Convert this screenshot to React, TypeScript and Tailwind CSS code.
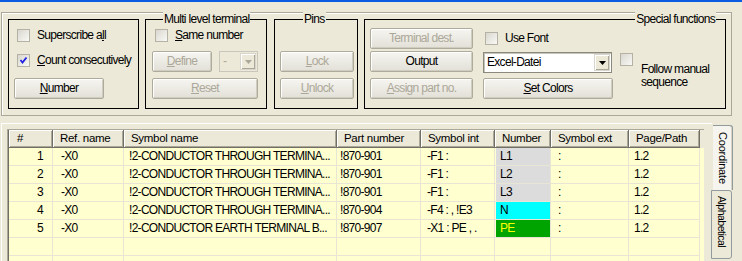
import React from "react";

type Kids = { children?: React.ReactNode; className?: string };

const Box = ({ checked }: { checked?: boolean }) => (
  <span className="relative block h-[13px] w-[13px] shrink-0 border border-[#b5b2a5] bg-gradient-to-br from-[#d9d7ce] to-[#f9f9f6]">
    {checked && (
      <svg viewBox="0 0 11 11" className="absolute left-0 top-0 h-[11px] w-[11px]">
        <path d="M2.5 5 L4.5 7.5 L8.5 2.5" fill="none" stroke="#2121e0" strokeWidth="1.8" />
      </svg>
    )}
  </span>
);

const Check = ({ children, className = "", checked }: Kids & { checked?: boolean }) => (
  <div className={`flex h-[13px] items-center gap-[7px] whitespace-nowrap ${className}`}>
    <Box checked={checked} />
    <span>{children}</span>
  </div>
);

const Btn = ({ children, className = "", off }: Kids & { off?: boolean }) => (
  <div
    className={`flex h-[21px] items-center justify-center whitespace-nowrap rounded-[2px] border border-[#aeab9d] bg-gradient-to-b from-[#f6f5f1] to-[#e2e0d7] shadow-[inset_1px_1px_0_#fff,inset_-1px_-1px_0_#cfccc0] ${
      off ? "text-[#aca899]" : "text-black"
    } ${className}`}
  >
    {children}
  </div>
);

const Arrow = ({ off }: { off?: boolean }) => (
  <div className="flex h-full w-[16px] items-center justify-center border border-[#d8d6cc] bg-[#ece9d8] shadow-[inset_1px_1px_0_#fff,inset_-1px_-1px_0_#aca899]">
    <svg viewBox="0 0 7 4" className="h-[4px] w-[7px]">
      <path d="M0 0 H7 L3.5 4 Z" fill={off ? "#aca899" : "#000"} />
    </svg>
  </div>
);

const Group = ({ children, className = "", title, titleClass = "" }: Kids & { title?: string; titleClass?: string }) => (
  <div className={`relative h-[90px] shrink-0 border border-black ${className}`}>
    {title && (
      <span className={`absolute -top-[8px] bg-[#ece9d8] px-[1px] leading-[14px] ${titleClass}`}>{title}</span>
    )}
    {children}
  </div>
);

const cols = [
  { label: "#", w: 44 },
  { label: "Ref. name", w: 71 },
  { label: "Symbol name", w: 213 },
  { label: "Part number", w: 84 },
  { label: "Symbol int", w: 74 },
  { label: "Number", w: 56 },
  { label: "Symbol ext", w: 78 },
  { label: "Page/Path", w: 71 },
];

const rows = [
  ["1", "-X0", "!2-CONDUCTOR THROUGH TERMINA...", "!870-901", "-F1 :", "L1", ":", "1.2"],
  ["2", "-X0", "!2-CONDUCTOR THROUGH TERMINA...", "!870-901", "-F1 :", "L2", ":", "1.2"],
  ["3", "-X0", "!2-CONDUCTOR THROUGH TERMINA...", "!870-901", "-F1 :", "L3", ":", "1.2"],
  ["4", "-X0", "!2-CONDUCTOR THROUGH TERMINA...", "!870-904", "-F4 :  , !E3", "N", ":", "1.2"],
  ["5", "-X0", "!2-CONDUCTOR EARTH TERMINAL B...", "!870-907", "-X1 : PE , .", "PE", ":", "1.2"],
  ["", "", "", "", "", "", "", ""],
  ["", "", "", "", "", "", "", ""],
];

const numColor: Record<string, string> = {
  L1: "bg-[#dcdcdc] text-black",
  L2: "bg-[#dcdcdc] text-black",
  L3: "bg-[#dcdcdc] text-black",
  N: "bg-[#00ffff] text-black",
  PE: "bg-[#00a400] text-[#ffff00]",
};

const pad = ["pr-[9px] justify-end", "pl-[8px]", "pl-[5px]", "pl-[3px]", "pl-[6px]", "", "pl-[7px]", "pl-[5px]"];

export default function App() {
  return (
    <div className="h-[261px] w-[742px] overflow-hidden bg-[#ece9d8] font-[family-name:Liberation_Sans,Arial,sans-serif] text-[12px] leading-[13px] tracking-[-0.7px] text-black">
      <div className="h-[2px] bg-[#0b5be2]" />

      {/* top options panel */}
      <div className="ml-[1px] mt-[10px] flex h-[104px] w-[731px] border border-[#aca899] pl-[6px] pt-[6px] shadow-[inset_1px_1px_0_#fff]">
        <Group className="w-[131px]">
          <div className="pl-[8px] pt-[9px]">
            <Check>
              Superscribe a<u>l</u>l
            </Check>
            <Check className="mt-[12px]" checked>
              <u>C</u>ount consecutively
            </Check>
            <Btn className="-ml-[3px] mt-[11px] w-[90px]">
              <u>N</u>umber
            </Btn>
          </div>
        </Group>

        <Group className="ml-[6px] w-[122px]" title="Multi level terminal" titleClass="left-[17px]">
          <div className="pl-[9px] pt-[9px]">
            <Check>
              <u>S</u>ame number
            </Check>
            <div className="-ml-[3px] mt-[9px] flex gap-[7px]">
              <Btn off className="w-[60px]">
                <u>D</u>efine
              </Btn>
              <div className="flex h-[21px] w-[39px] items-center border border-[#c9c7bc] bg-[#ece9d8] p-[1px] pl-[3px] text-[#aca899]">
                <span className="flex-1">-</span>
                <Arrow off />
              </div>
            </div>
            <Btn off className="-ml-[3px] mt-[6px] w-[106px]">
              <u>R</u>eset
            </Btn>
          </div>
        </Group>

        <Group className="ml-[7px] w-[84px]" title="Pins" titleClass="left-[28px]">
          <div className="pl-[5px] pt-[31px]">
            <Btn off className="w-[74px]">
              <u>L</u>ock
            </Btn>
            <Btn off className="mt-[6px] w-[74px]">
              <u>U</u>nlock
            </Btn>
          </div>
        </Group>

        <Group className="ml-[6px] flex w-[362px]" title="Special functions" titleClass="right-[9px]">
          <div className="pl-[5px] pt-[8px]">
            <Btn off className="w-[103px]">
              Terminal dest.
            </Btn>
            <Btn className="mt-[2px] w-[103px]">Output</Btn>
            <Btn off className="mt-[6px] w-[103px]">
              <u>A</u>ssign part no.
            </Btn>
          </div>
          <div className="ml-[10px] pt-[12px]">
            <Check className="ml-[2px]">Use Font</Check>
            <div className="mt-[7px] flex h-[21px] w-[129px] items-center border border-[#8b897d] bg-white p-[1px] pl-[3px] shadow-[inset_1px_1px_0_#c6c4b8]">
              <span className="flex-1">Excel-Datei</span>
              <Arrow />
            </div>
            <Btn className="mt-[5px] w-[130px]">
              <u>S</u>et Colors
            </Btn>
          </div>
          <div className="ml-[7px] flex pt-[33px]">
            <Box />
            <div className="ml-[8px] mt-[10px] leading-[13px]">
              <div>Follow manual</div>
              <div>sequence</div>
            </div>
          </div>
        </Group>
      </div>

      {/* table with side tabs */}
      <div className="mt-[7px] flex">
        <div className="ml-[1px] h-[140px] w-[711px] border-l border-t border-white pl-[5px] pt-[5px]">
          <div className="h-full w-[697px] border-l border-t border-[#aca899] bg-[#ffffd0] pl-[1px] shadow-[inset_1px_1px_0_#716f64]">
            <div className="flex h-[18px] bg-[#ece9d8] text-[11.5px] tracking-[-0.3px]">
              {cols.map((c, i) => (
                <div
                  key={c.label}
                  style={{ width: c.w }}
                  className={`flex h-full items-center border-b border-r border-[#716f64] shadow-[inset_1px_1px_0_#fff,inset_-1px_-1px_0_#aca899] ${
                    i === 0 ? "pl-[8px]" : "pl-[7px]"
                  }`}
                >
                  {c.label}
                </div>
              ))}
            </div>
            {rows.map((r, ri) => (
              <div key={ri} className="flex h-[18px]">
                {r.map((v, ci) => (
                  <div
                    key={ci}
                    style={{ width: cols[ci].w }}
                    className={`flex h-full items-center overflow-hidden whitespace-nowrap border-b border-r border-[#e8e5d5] ${pad[ci]}`}
                  >
                    {ci === 5 && v ? (
                      <div className={`ml-[1px] flex h-full w-full items-center pl-[4px] ${numColor[v]}`}>{v}</div>
                    ) : (
                      v
                    )}
                  </div>
                ))}
              </div>
            ))}
          </div>
        </div>

        <div className="flex flex-col">
          <div className="ml-[1px] mt-[2px] flex h-[65px] w-[20px] justify-center rounded-tr-[3px] border-r border-t border-[#919b9c] bg-[#f5f4ef] pt-[6px] shadow-[inset_-1px_0_0_#d6d3c6]">
            <span className="text-[11px] tracking-[-0.2px] [writing-mode:vertical-rl]">Coordinate</span>
          </div>
          <div className="-ml-[1px] flex h-[69px] w-[21px] justify-center overflow-hidden rounded-r-[3px] border border-[#919b9c] bg-[#ece9d8] pt-[5px]">
            <span className="text-[10.5px] leading-[13px] tracking-[-0.5px] [writing-mode:vertical-rl]">Alphabetical</span>
          </div>
        </div>
      </div>
    </div>
  );
}
